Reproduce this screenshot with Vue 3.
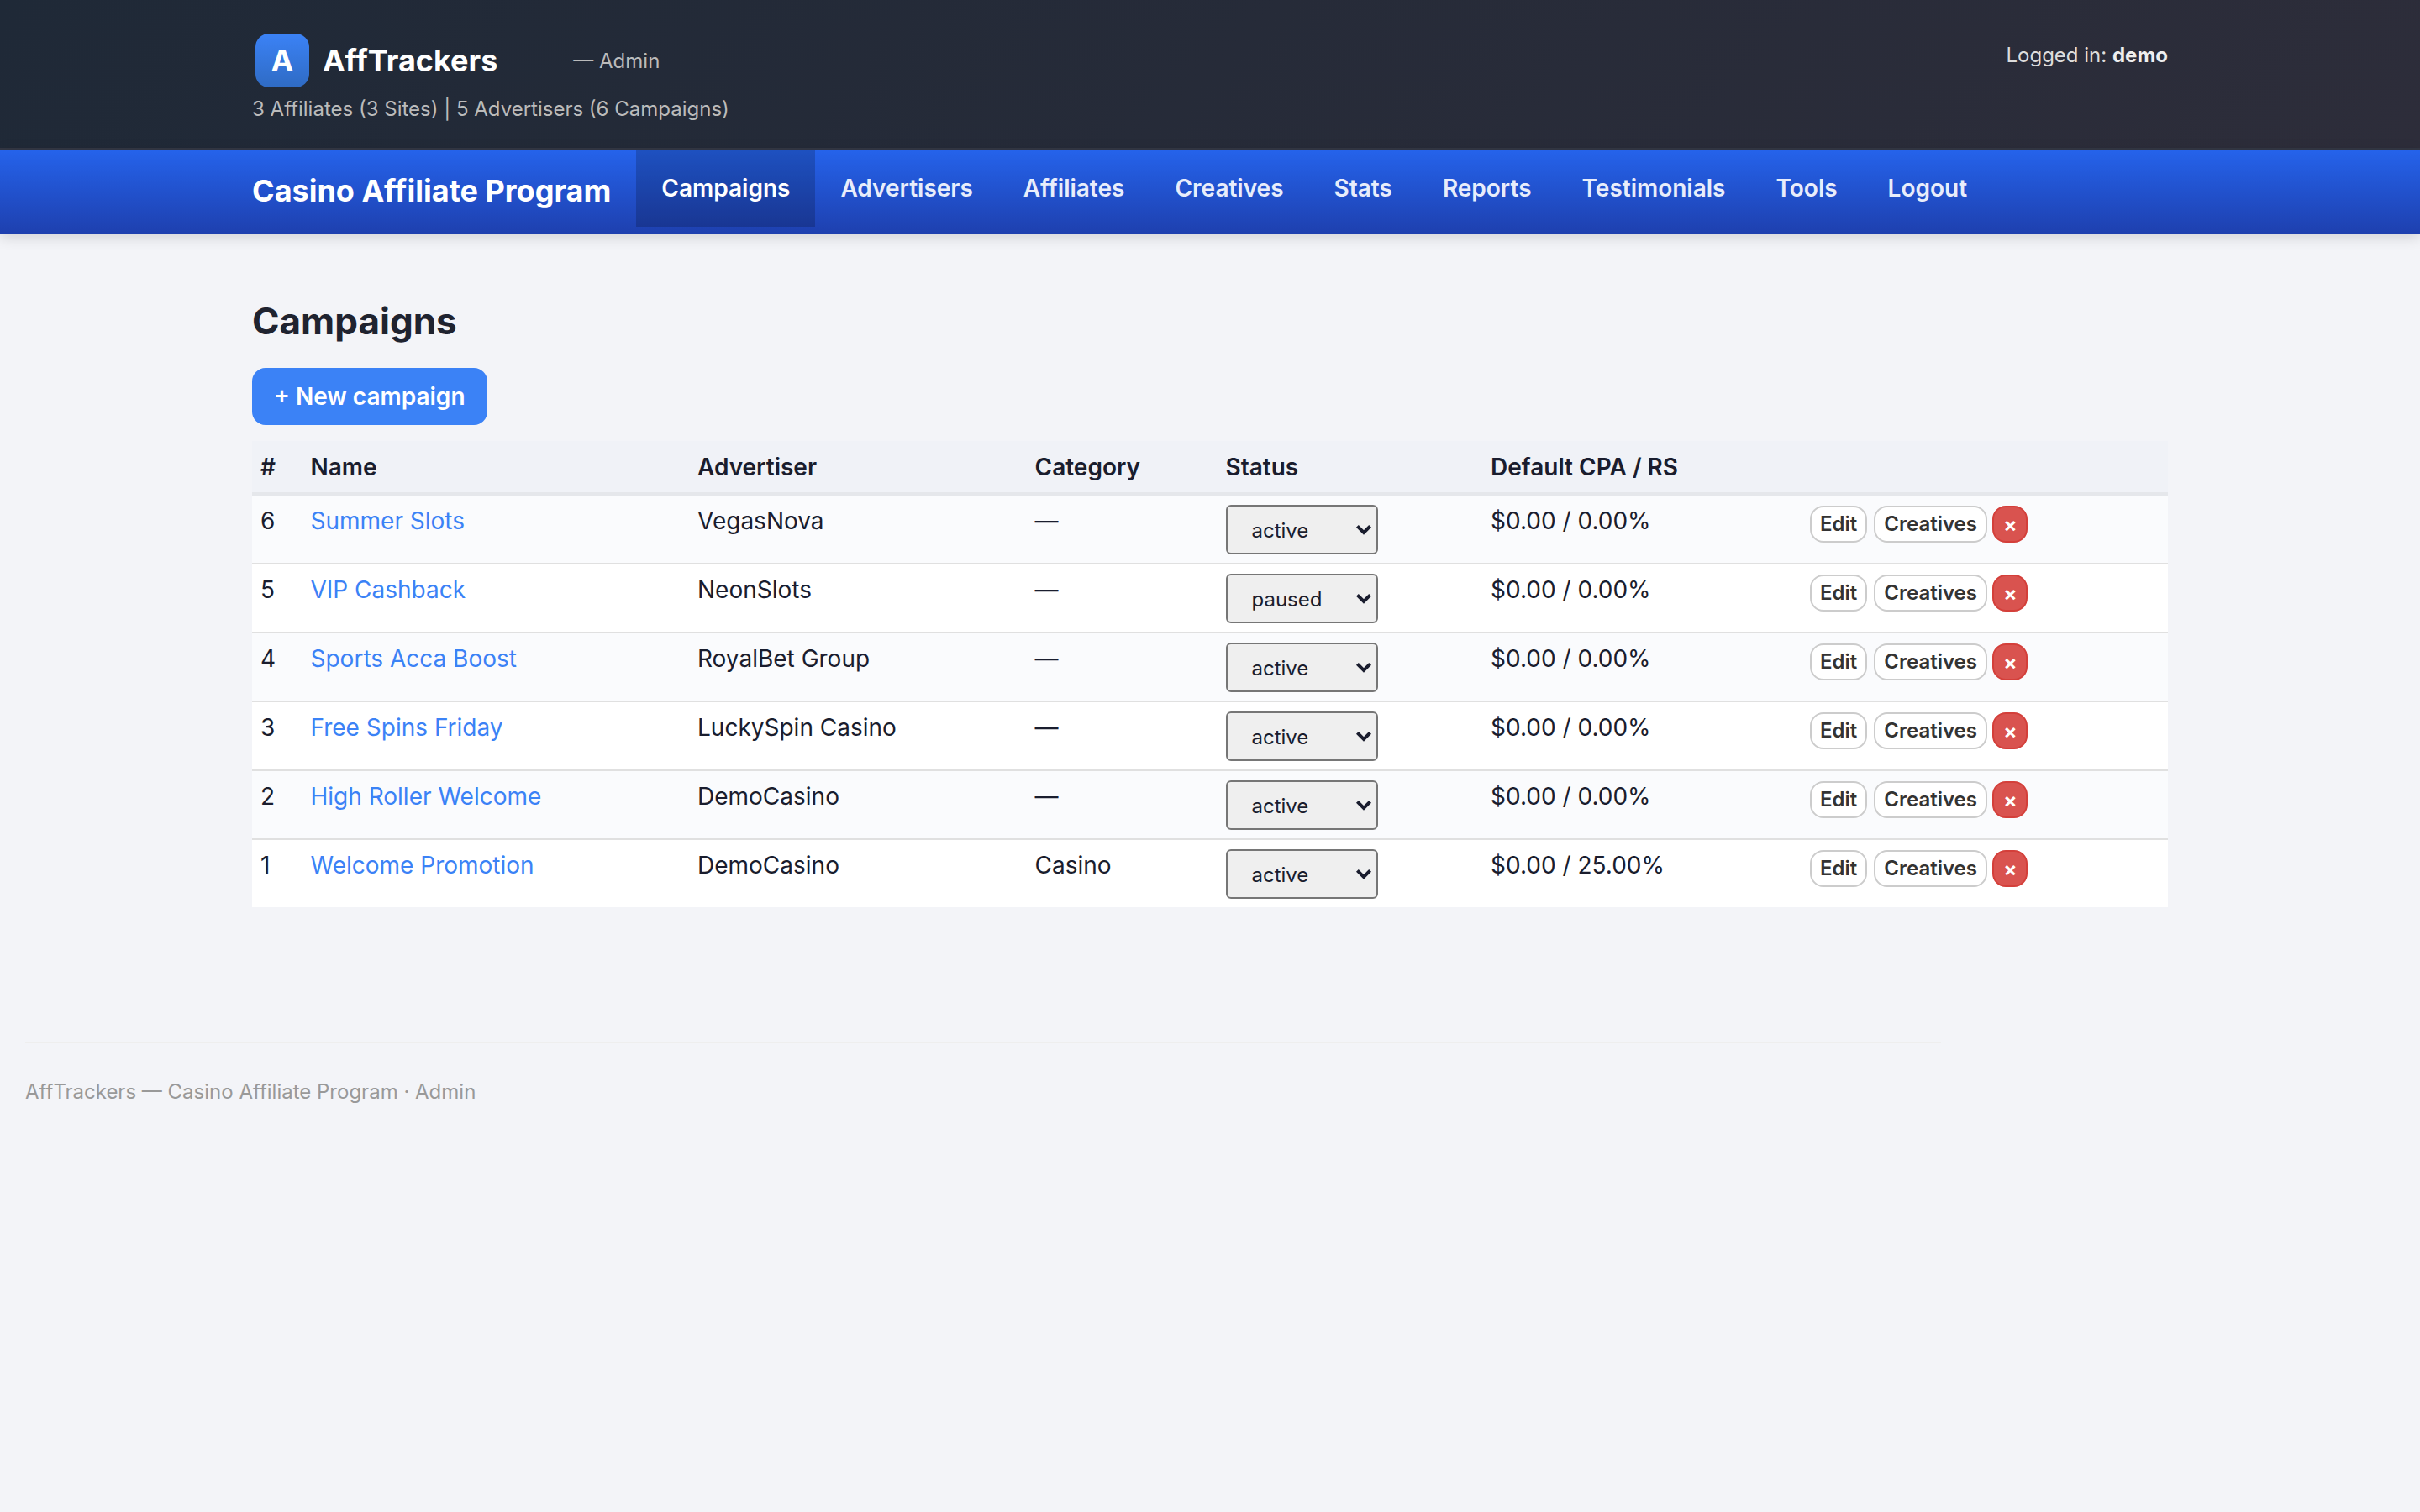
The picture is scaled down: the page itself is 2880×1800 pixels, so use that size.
<template>
  <div class="page">
    <header class="topbar">
      <div class="topbar-inner">
        <div>
          <div class="logo-row">
            <span class="logo">A</span>
            <span class="site-name">AffTrackers</span>
            <span class="site-role">— Admin</span>
          </div>
          <div class="summary">3 Affiliates (3 Sites) | 5 Advertisers (6 Campaigns)</div>
        </div>
        <div class="logged">Logged in: <strong>demo</strong></div>
      </div>
    </header>

    <nav class="mainnav">
      <div class="nav-inner">
        <span class="brand">Casino Affiliate Program</span>
        <a v-for="link in links" :key="link" href="#" class="nav-link" :class="{ active: link === 'Campaigns' }">{{ link }}</a>
      </div>
    </nav>

    <main class="content">
      <h1>Campaigns</h1>
      <a href="#" class="btn-new">+ New campaign</a>
      <table class="grid">
        <colgroup>
          <col class="c-id" />
          <col class="c-name" />
          <col class="c-adv" />
          <col class="c-cat" />
          <col class="c-status" />
          <col class="c-cpa" />
          <col />
        </colgroup>
        <thead>
          <tr>
            <th>#</th>
            <th>Name</th>
            <th>Advertiser</th>
            <th>Category</th>
            <th>Status</th>
            <th>Default CPA / RS</th>
            <th></th>
          </tr>
        </thead>
        <tbody>
          <tr v-for="row in campaigns" :key="row.id">
            <td>{{ row.id }}</td>
            <td><a href="#" class="name-link">{{ row.name }}</a></td>
            <td>{{ row.advertiser }}</td>
            <td>{{ row.category }}</td>
            <td>
              <span class="status-wrap">
                <select class="status" :value="row.status">
                  <option value="active">active</option>
                  <option value="paused">paused</option>
                </select>
                <svg class="chevron" viewBox="0 0 10 7" width="10" height="7">
                  <path d="M1.2 1.2 L5 5 L8.8 1.2" fill="none" stroke="#1a1d2e" stroke-width="2" />
                </svg>
              </span>
            </td>
            <td>{{ row.rates }}</td>
            <td>
              <div class="actions">
                <a href="#" class="btn-small">Edit</a>
                <a href="#" class="btn-small">Creatives</a>
                <button class="btn-del">×</button>
              </div>
            </td>
          </tr>
        </tbody>
      </table>
    </main>

    <footer class="foot">AffTrackers — Casino Affiliate Program · Admin</footer>
  </div>
</template>

<script setup>
const links = ['Campaigns', 'Advertisers', 'Affiliates', 'Creatives', 'Stats', 'Reports', 'Testimonials', 'Tools', 'Logout'];

const campaigns = [
  { id: 6, name: 'Summer Slots', advertiser: 'VegasNova', category: '—', status: 'active', rates: '$0.00 / 0.00%' },
  { id: 5, name: 'VIP Cashback', advertiser: 'NeonSlots', category: '—', status: 'paused', rates: '$0.00 / 0.00%' },
  { id: 4, name: 'Sports Acca Boost', advertiser: 'RoyalBet Group', category: '—', status: 'active', rates: '$0.00 / 0.00%' },
  { id: 3, name: 'Free Spins Friday', advertiser: 'LuckySpin Casino', category: '—', status: 'active', rates: '$0.00 / 0.00%' },
  { id: 2, name: 'High Roller Welcome', advertiser: 'DemoCasino', category: '—', status: 'active', rates: '$0.00 / 0.00%' },
  { id: 1, name: 'Welcome Promotion', advertiser: 'DemoCasino', category: 'Casino', status: 'active', rates: '$0.00 / 25.00%' }
];
</script>

<style>
body {
  margin: 0;
  background: #f3f4f8;
}
</style>

<style scoped>
.page {
  zoom: 2;
  font-family: Inter, "Liberation Sans", sans-serif;
  font-size: 14px;
  line-height: 20px;
  color: #1a1d2e;
}
.topbar {
  height: 88px;
  background: linear-gradient(135deg, #1f2937, #2d2d3a);
  border-bottom: 1px solid #333744;
}
.topbar-inner {
  width: 1140px;
  margin: 0 auto;
  display: flex;
  justify-content: space-between;
}
.logo-row {
  display: flex;
  align-items: center;
  padding: 20px 0 0 2px;
}
.logo {
  width: 32px;
  height: 32px;
  border-radius: 8px;
  background: linear-gradient(180deg, #3b82f6, #2f6bc4);
  color: #fff;
  font-size: 18px;
  font-weight: 700;
  display: flex;
  align-items: center;
  justify-content: center;
  margin-right: 8px;
}
.site-name {
  color: #fff;
  font-size: 18px;
  font-weight: 700;
  margin-right: 45px;
}
.site-role {
  color: #bbb;
  font-size: 12px;
  padding-top: 1px;
}
.summary {
  color: #bbb;
  font-size: 12px;
  margin-top: 3px;
}
.logged {
  color: #ddd;
  font-size: 12px;
  padding-top: 23px;
}
.logged strong {
  color: #eee;
}
.mainnav {
  height: 50px;
  background: linear-gradient(180deg, #2563eb, #1e40af);
  box-shadow: 0 2px 8px rgba(0, 0, 0, 0.15);
}
.nav-inner {
  width: 1140px;
  margin: 0 auto;
  display: flex;
  align-items: flex-start;
}
.brand {
  color: #fff;
  font-size: 18px;
  font-weight: 700;
  line-height: 49px;
  margin-right: 15px;
}
.nav-link {
  color: #e8edfb;
  font-weight: 600;
  text-decoration: none;
  line-height: 46px;
  padding: 0 15px;
}
.nav-link.active {
  color: #fff;
  background: rgba(0, 0, 0, 0.18);
}
.content {
  width: 1140px;
  margin: 0 auto;
}
h1 {
  margin: 0;
  padding-top: 37px;
  font-size: 22px;
  line-height: 30px;
  font-weight: 700;
  color: #1f2330;
}
.btn-new {
  display: block;
  width: max-content;
  margin-top: 13px;
  padding: 7px 13px;
  border-radius: 8px;
  background: #3b82f6;
  color: #fff;
  font-weight: 600;
  text-decoration: none;
}
.grid {
  width: 100%;
  margin-top: 9.5px;
  table-layout: fixed;
  border-collapse: collapse;
  background: #fff;
}
.c-id { width: 29.75px; }
.c-name { width: 230.25px; }
.c-adv { width: 200.75px; }
.c-cat { width: 113.5px; }
.c-status { width: 157.75px; }
.c-cpa { width: 190px; }
th {
  background: #f0f2f7;
  border-bottom: 2px solid #e5e7eb;
  font-weight: 600;
  text-align: left;
  padding: 5px;
  height: 20.5px;
}
td {
  padding: 5px;
  vertical-align: top;
  border-bottom: 1px solid #e0e0e0;
  height: 30px;
}
tbody tr:nth-child(odd) {
  background: #fafbfd;
}
tbody tr:last-child td {
  border-bottom: none;
}
.name-link {
  color: #3b82f6;
  text-decoration: none;
}
.status-wrap {
  position: relative;
  display: block;
  width: 90.5px;
  height: 29.5px;
  margin-top: 0.5px;
}
.status {
  appearance: none;
  display: block;
  box-sizing: border-box;
  width: 100%;
  height: 100%;
  margin: 0;
  padding: 1px 10px 0 14.5px;
  border: 1px solid #767676;
  border-radius: 3px;
  background: #efefef;
  font-family: inherit;
  font-size: 12px;
  color: #1a1d2e;
}
.chevron {
  position: absolute;
  right: 3.4px;
  top: 11.5px;
  pointer-events: none;
}
.actions {
  display: flex;
  gap: 4px;
  padding-top: 1px;
}
.btn-small {
  display: block;
  box-sizing: border-box;
  height: 22px;
  padding: 0 5px;
  border: 1px solid #ccc;
  border-radius: 8px;
  background: #fff;
  color: #333;
  font-size: 12px;
  line-height: 20px;
  font-weight: 600;
  text-decoration: none;
}
.btn-del {
  box-sizing: border-box;
  width: 21px;
  height: 22px;
  margin-left: -0.75px;
  padding: 0;
  border: 1px solid #d43f3a;
  border-radius: 8px;
  background: #d9534f;
  color: #fff;
  font-family: inherit;
  font-size: 12px;
  font-weight: 700;
}
.foot {
  width: 1140px;
  margin: 80px 0 0 15px;
  padding-top: 19px;
  border-top: 1px solid #eee;
  color: #999;
  font-size: 12px;
}
</style>
